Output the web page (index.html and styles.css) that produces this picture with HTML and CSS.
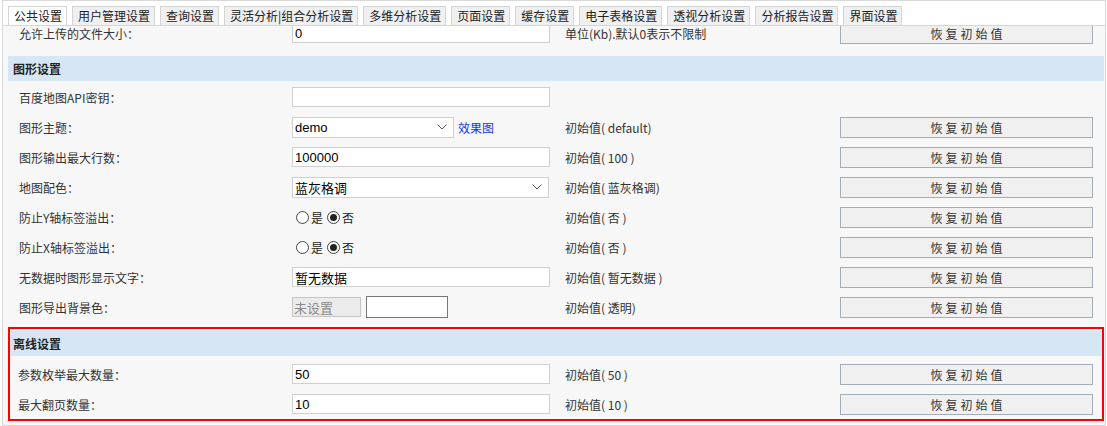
FILE: index.html
```html
<!DOCTYPE html>
<html lang="zh-CN">
<head>
<meta charset="utf-8">
<title>公共设置</title>
<link rel="stylesheet" href="styles.css">
</head>
<body>
<div class="frame">
  <div class="tabs">
    <span class="tab active">公共设置</span>
    <span class="tab">用户管理设置</span>
    <span class="tab">查询设置</span>
    <span class="tab">灵活分析|组合分析设置</span>
    <span class="tab">多维分析设置</span>
    <span class="tab">页面设置</span>
    <span class="tab">缓存设置</span>
    <span class="tab">电子表格设置</span>
    <span class="tab">透视分析设置</span>
    <span class="tab">分析报告设置</span>
    <span class="tab">界面设置</span>
  </div>
  <div class="panel">
    <div class="grid first">
      <div class="lbl">允许上传的文件大小：</div>
      <div><input class="inp" type="text" value="0"></div>
      <div class="init">单位(Kb).默认0表示不限制</div>
      <div><button class="btn">恢复初始值</button></div>
    </div>

    <section class="sec">
      <div class="band">图形设置</div>
      <div class="grid">
        <div class="lbl">百度地图API密钥：</div>
        <div><input class="inp" type="text" value=""></div>
        <div></div>
        <div></div>

        <div class="lbl">图形主题：</div>
        <div class="selwrap">
          <div class="sel short"><span>demo</span><svg class="chev" width="10" height="6" viewBox="0 0 10 6"><polyline points="0.5,0.5 5,5 9.5,0.5" fill="none" stroke="#555" stroke-width="1"/></svg></div>
          <a class="link">效果图</a>
        </div>
        <div class="init">初始值( default)</div>
        <div><button class="btn">恢复初始值</button></div>

        <div class="lbl">图形输出最大行数：</div>
        <div><input class="inp" type="text" value="100000"></div>
        <div class="init">初始值( 100 )</div>
        <div><button class="btn">恢复初始值</button></div>

        <div class="lbl">地图配色：</div>
        <div class="sel full"><span class="cjk">蓝灰格调</span><svg class="chev" width="10" height="6" viewBox="0 0 10 6"><polyline points="0.5,0.5 5,5 9.5,0.5" fill="none" stroke="#555" stroke-width="1"/></svg></div>
        <div class="init">初始值( 蓝灰格调)</div>
        <div><button class="btn">恢复初始值</button></div>

        <div class="lbl">防止Y轴标签溢出：</div>
        <div class="radios"><span class="radio"></span><span class="rtxt">是</span><span class="radio on"></span><span class="rtxt">否</span></div>
        <div class="init">初始值( 否 )</div>
        <div><button class="btn">恢复初始值</button></div>

        <div class="lbl">防止X轴标签溢出：</div>
        <div class="radios"><span class="radio"></span><span class="rtxt">是</span><span class="radio on"></span><span class="rtxt">否</span></div>
        <div class="init">初始值( 否 )</div>
        <div><button class="btn">恢复初始值</button></div>

        <div class="lbl">无数据时图形显示文字：</div>
        <div><input class="inp cjkin" type="text" value="暂无数据"></div>
        <div class="init">初始值( 暂无数据 )</div>
        <div><button class="btn">恢复初始值</button></div>

        <div class="lbl">图形导出背景色：</div>
        <div class="colorrow"><input class="unset" type="text" value="未设置" disabled><span class="swatch"></span></div>
        <div class="init">初始值( 透明)</div>
        <div><button class="btn">恢复初始值</button></div>
      </div>
    </section>

    <section class="sec hl">
      <div class="band">离线设置</div>
      <div class="grid">
        <div class="lbl">参数枚举最大数量：</div>
        <div><input class="inp" type="text" value="50"></div>
        <div class="init">初始值( 50 )</div>
        <div><button class="btn">恢复初始值</button></div>

        <div class="lbl">最大翻页数量：</div>
        <div><input class="inp" type="text" value="10"></div>
        <div class="init">初始值( 10 )</div>
        <div><button class="btn">恢复初始值</button></div>
      </div>
    </section>
  </div>
</div>
</body>
</html>
```
FILE: styles.css
```css
* { box-sizing: border-box; }

body {
  margin: 0;
  background: #fff;
  font-family: "Noto Sans CJK SC", "Liberation Sans", sans-serif;
  font-size: 12px;
  color: #333;
}

.frame {
  margin-left: 2px;
  width: 1104px;
  height: 426px;
  border: 1px solid #d9d9d9;
  display: flex;
  flex-direction: column;
}

.tabs {
  height: 25px;
  flex: none;
  display: flex;
  align-items: flex-end;
  gap: 5px;
  padding-left: 5px;
  border-bottom: 1px solid #d6d6d6;
  background: #fff;
}

.tab {
  height: 19px;
  line-height: 18px;
  padding: 0 4px 0 5px;
  border: 1px solid #d4d4d4;
  border-bottom: none;
  background: #f0f0f0;
  color: #222;
  white-space: nowrap;
}

.tab.active {
  background: #fff;
}

.panel {
  flex: 1;
  background: #f7f7f7;
  overflow: hidden;
  padding: 0 1px 0 5px;
}

.grid {
  display: grid;
  grid-template-columns: 284px 273px 275px 253px;
  grid-auto-rows: 30px;
  align-items: center;
}

.first {
  margin-top: -8px;
}

.lbl {
  padding-left: 11px;
  color: #333;
  white-space: nowrap;
}

.init {
  color: #333;
  white-space: nowrap;
}

.sec {
  margin-top: 8px;
}

.sec .grid {
  padding-top: 1px;
}

.band {
  height: 25px;
  line-height: 25px;
  background: #d6e6f5;
  font-weight: bold;
  padding-left: 5px;
  color: #222;
}

.hl {
  margin-top: 5px;
  border: 2px solid #ff0000;
  padding-top: 2px;
}

.hl .band {
  padding-left: 3px;
}

.hl .lbl {
  padding-left: 8px;
}

.hl .grid {
  padding-top: 3px;
  grid-template-columns: 282px 273px 275px 253px;
}

.inp {
  display: block;
  width: 258px;
  height: 20px;
  margin: 0;
  border: 1px solid #d0d0d0;
  background: #fff;
  font-family: "Liberation Sans", sans-serif;
  font-size: 13px;
  color: #000;
  padding: 0 2px;
  outline: none;
}

.inp.cjkin {
  font-family: "Noto Sans CJK SC", sans-serif;
}

.btn {
  display: block;
  width: 253px;
  height: 21px;
  margin: 0;
  padding: 0 0 0 3px;
  border: 1px solid #a2adb9;
  background: #f0f0f0;
  font-family: "Noto Sans CJK SC", sans-serif;
  font-size: 12px;
  letter-spacing: 3px;
  color: #333;
  line-height: 19px;
}

.selwrap {
  display: flex;
  align-items: center;
  gap: 4px;
}

.sel {
  height: 21px;
  border: 1px solid #d0d0d0;
  background: #fff;
  display: flex;
  align-items: center;
  justify-content: space-between;
  padding: 0 6px 0 2px;
  font-family: "Liberation Sans", sans-serif;
  font-size: 13px;
  color: #000;
}

.sel .cjk {
  font-family: "Noto Sans CJK SC", sans-serif;
}

.sel.short {
  width: 162px;
}

.sel.full {
  width: 257px;
}

.chev {
  display: block;
}

.link {
  color: #1536e8;
  cursor: pointer;
}

.radios {
  display: flex;
  align-items: center;
  padding-left: 4px;
}

.radio {
  width: 13px;
  height: 13px;
  border: 1px solid #444;
  border-radius: 50%;
  background: #fff;
  display: flex;
  align-items: center;
  justify-content: center;
}

.radio.on::after {
  content: "";
  width: 7px;
  height: 7px;
  border-radius: 50%;
  background: #222;
}

.rtxt {
  margin: 0 4px 0 2px;
  color: #222;
}

.colorrow {
  display: flex;
  align-items: center;
  gap: 5px;
}

.unset {
  width: 69px;
  height: 20px;
  margin: 0;
  border: 1px solid #c4c4c4;
  background: #ebebeb;
  color: #8a8a8a;
  font-family: "Noto Sans CJK SC", sans-serif;
  font-size: 13px;
  padding: 0 1px;
}

.swatch {
  width: 82px;
  height: 22px;
  border: 1px solid #777;
  background: #fff;
}
```
